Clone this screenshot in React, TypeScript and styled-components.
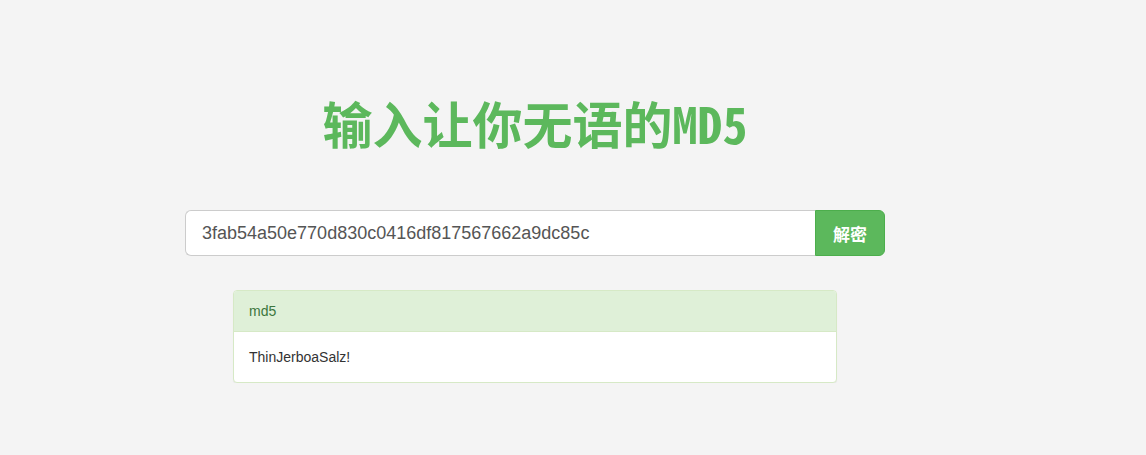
import React from "react";
import styled, { createGlobalStyle } from "styled-components";

const Global = createGlobalStyle`
  html, body { margin: 0; padding: 0; background: #f4f4f4; }
  body { font-family: "Liberation Sans", Arial, sans-serif; font-size: 14px; color: #333; }
  * { box-sizing: border-box; }
`;

const Page = styled.div`
  width: 700px;
  margin-left: 185px;
  padding-top: 87px;
`;

const Title = styled.h1`
  margin: 0;
  text-align: center;
  color: #5cb85c;
  font-family: "Noto Sans Mono CJK SC", "Noto Sans CJK SC", sans-serif;
  font-weight: 700;
  font-size: 50px;
  line-height: 70px;
`;

const Form = styled.div`
  display: flex;
  margin-top: 53px;
  height: 46px;
`;

const Input = styled.input`
  flex: 1;
  height: 46px;
  padding: 10px 16px;
  font-family: "Liberation Sans", Arial, sans-serif;
  font-size: 18px;
  color: #555;
  background: #fff;
  border: 1px solid #ccc;
  border-right: none;
  border-radius: 6px 0 0 6px;
  outline: none;
`;

const Button = styled.button`
  width: 70px;
  height: 46px;
  background: #5cb85c;
  border: 1px solid #4cae4c;
  border-radius: 0 6px 6px 0;
  color: #fff;
  font-family: "Noto Sans CJK SC", sans-serif;
  font-weight: 700;
  font-size: 17px;
  padding: 0;
`;

const Panel = styled.div`
  width: 604px;
  margin: 34px auto 0;
  background: #fff;
  border: 1px solid #d6e9c6;
  border-radius: 4px;
  box-shadow: 0 1px 1px rgba(0,0,0,0.05);
`;

const PanelHeading = styled.div`
  padding: 10px 15px;
  line-height: 20px;
  background: #dff0d8;
  color: #3c763d;
  border-bottom: 1px solid #d6e9c6;
  border-radius: 3px 3px 0 0;
  font-size: 14px;
`;

const PanelBody = styled.div`
  padding: 15px;
  line-height: 20px;
  font-size: 14px;
  color: #333;
`;

export default function App() {
  return (
    <>
      <Global />
      <Page>
        <Title>输入让你无语的MD5</Title>
        <Form>
          <Input defaultValue="3fab54a50e770d830c0416df817567662a9dc85c" />
          <Button>解密</Button>
        </Form>
        <Panel>
          <PanelHeading>md5</PanelHeading>
          <PanelBody>ThinJerboaSalz!</PanelBody>
        </Panel>
      </Page>
    </>
  );
}
